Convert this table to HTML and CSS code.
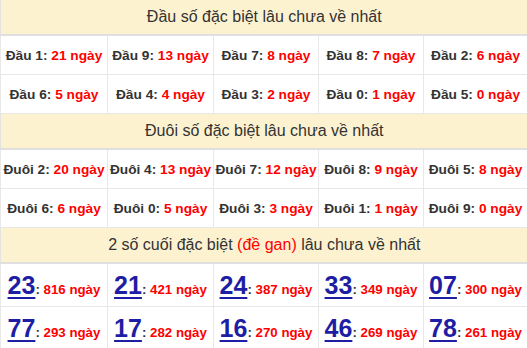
FILE: index.html
```html
<!DOCTYPE html>
<html lang="vi">
<head>
<meta charset="utf-8">
<title>Lô gan</title>
<link rel="stylesheet" href="styles.css">
</head>
<body>
<table class="gan">
  <colgroup>
    <col class="c1"><col class="c2"><col class="c3"><col class="c4"><col class="c5">
  </colgroup>
  <tr class="head"><th colspan="5">Đầu số đặc biệt lâu chưa về nhất</th></tr>
  <tr class="row">
    <td>Đầu 1: <span class="red">21 ngày</span></td>
    <td>Đầu 9: <span class="red">13 ngày</span></td>
    <td>Đầu 7: <span class="red">8 ngày</span></td>
    <td>Đầu 8: <span class="red">7 ngày</span></td>
    <td>Đầu 2: <span class="red">6 ngày</span></td>
  </tr>
  <tr class="row">
    <td>Đầu 6: <span class="red">5 ngày</span></td>
    <td>Đầu 4: <span class="red">4 ngày</span></td>
    <td>Đầu 3: <span class="red">2 ngày</span></td>
    <td>Đầu 0: <span class="red">1 ngày</span></td>
    <td>Đầu 5: <span class="red">0 ngày</span></td>
  </tr>
  <tr class="head"><th colspan="5">Đuôi số đặc biệt lâu chưa về nhất</th></tr>
  <tr class="row">
    <td>Đuôi 2: <span class="red">20 ngày</span></td>
    <td>Đuôi 4: <span class="red">13 ngày</span></td>
    <td>Đuôi 7: <span class="red">12 ngày</span></td>
    <td>Đuôi 8: <span class="red">9 ngày</span></td>
    <td>Đuôi 5: <span class="red">8 ngày</span></td>
  </tr>
  <tr class="row">
    <td>Đuôi 6: <span class="red">6 ngày</span></td>
    <td>Đuôi 0: <span class="red">5 ngày</span></td>
    <td>Đuôi 3: <span class="red">3 ngày</span></td>
    <td>Đuôi 1: <span class="red">1 ngày</span></td>
    <td>Đuôi 9: <span class="red">0 ngày</span></td>
  </tr>
  <tr class="head"><th colspan="5">2 số cuối đặc biệt <span class="red-n">(đề gan)</span> lâu chưa về nhất</th></tr>
  <tr class="row num">
    <td><a class="big" href="#">23</a>: <span class="red">816 ngày</span></td>
    <td><a class="big" href="#">21</a>: <span class="red">421 ngày</span></td>
    <td><a class="big" href="#">24</a>: <span class="red">387 ngày</span></td>
    <td><a class="big" href="#">33</a>: <span class="red">349 ngày</span></td>
    <td><a class="big" href="#">07</a>: <span class="red">300 ngày</span></td>
  </tr>
  <tr class="row num">
    <td><a class="big" href="#">77</a>: <span class="red">293 ngày</span></td>
    <td><a class="big" href="#">17</a>: <span class="red">282 ngày</span></td>
    <td><a class="big" href="#">16</a>: <span class="red">270 ngày</span></td>
    <td><a class="big" href="#">46</a>: <span class="red">269 ngày</span></td>
    <td><a class="big" href="#">78</a>: <span class="red">261 ngày</span></td>
  </tr>
</table>
</body>
</html>
```
FILE: styles.css
```css
html, body {
  margin: 0;
  padding: 0;
  background: #fff;
}

body {
  font-family: "Liberation Sans", Arial, sans-serif;
  color: #333;
}

.gan {
  width: 527px;
  border-collapse: collapse;
  table-layout: fixed;
}

.c1 { width: 107px; }
.c2 { width: 106px; }
.c3 { width: 105px; }
.c4 { width: 105px; }
.c5 { width: 104px; }

.head th {
  height: 34px;
  padding: 0;
  background: #fdf2d0;
  border-left: 1px solid #e3e3e3;
  border-bottom: 2px solid #e0e0e0;
  font-size: 16px;
  font-weight: normal;
  color: #333;
  text-align: center;
  vertical-align: middle;
}

.row td {
  height: 38px;
  padding: 0;
  border: 1px solid #e8e8e8;
  border-top: none;
  font-size: 13.7px;
  font-weight: bold;
  color: #333;
  text-align: center;
  vertical-align: middle;
  white-space: nowrap;
}

.row.num td {
  height: 42px;
  font-size: 13.3px;
}

.red {
  color: #f00;
}

.red-n {
  color: #f00;
  font-weight: normal;
}

.big {
  font-size: 25px;
  font-weight: bold;
  color: #1e1ea4;
  text-decoration: underline;
  text-decoration-thickness: 2px;
  text-underline-offset: 3px;
}
```
